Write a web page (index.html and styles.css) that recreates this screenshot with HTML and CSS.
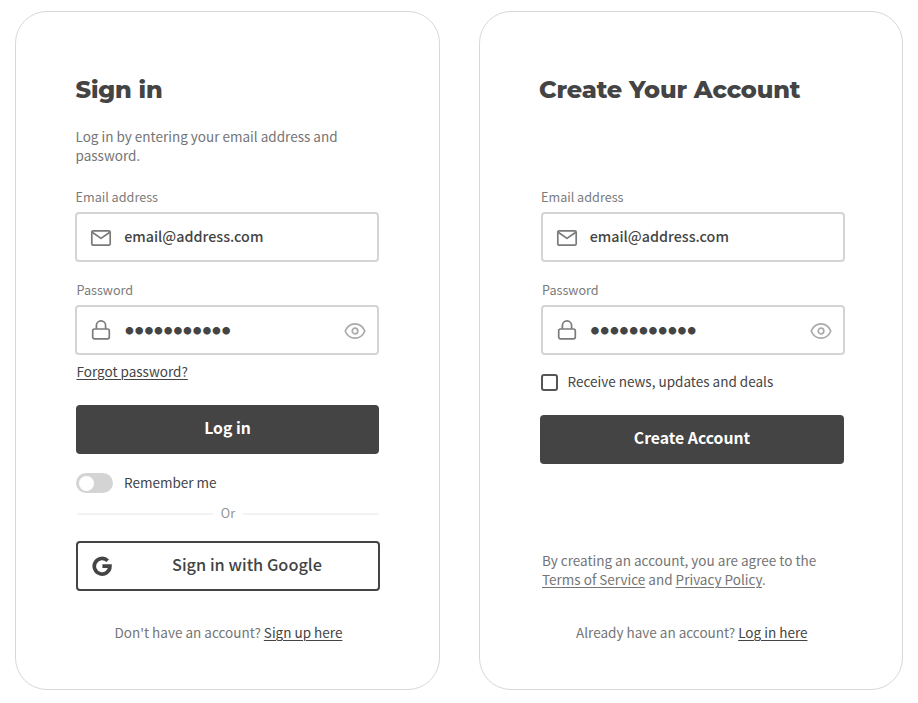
FILE: index.html
```html
<!DOCTYPE html>
<html lang="en">
<head>
<meta charset="utf-8">
<title>Sign in</title>
<link rel="stylesheet" href="styles.css">
</head>
<body>
<svg class="sprite" aria-hidden="true">
  <symbol id="mail" viewBox="0 0 22 18"><rect x="1.8" y="1.8" width="18.4" height="14.4" rx="1.4"/><path d="M2.2 3.2l8.800 6.200 8.800-6.200"/></symbol>
  <symbol id="lock" viewBox="0 0 20 22"><rect x="1.7" y="10" width="16.6" height="9.9" rx="1.8"/><path d="M5.4 9.800V6.500a4.6 4.6 0 0 1 9.2 0v3.3"/></symbol>
  <symbol id="eye" viewBox="0 0 22 18"><path d="M1.2 9C3.2 4.300 6.700 1.900 11 1.900S18.800 4.300 20.800 9C18.800 13.700 15.300 16.100 11 16.100S3.200 13.700 1.200 9z"/><circle cx="11" cy="9" r="2.800"/></symbol>
</svg>
<main class="page">
  <section class="card">
    <h1>Sign in</h1>
    <p class="intro">Log in by entering your email address and password.</p>
    <label class="label">Email address</label>
    <div class="field">
      <svg class="mail"><use href="#mail"/></svg>
      <span class="value">email@address.com</span>
    </div>
    <label class="label label-password">Password</label>
    <div class="field">
      <svg class="lock"><use href="#lock"/></svg>
      <span class="dots">●●●●●●●●●●●</span>
      <svg class="eye"><use href="#eye"/></svg>
    </div>
    <a class="forgot" href="#">Forgot password?</a>
    <button class="primary">Log in</button>
    <div class="remember"><span class="toggle"></span><span class="text">Remember me</span></div>
    <div class="divider"><span class="text">Or</span></div>
    <button class="google">
      <svg viewBox="0 0 20 20"><path d="M15.700 4.800A7.800 7.800 0 1 0 17.900 10.200H10.400"/></svg>
      <span>Sign in with Google</span>
    </button>
    <p class="footer">Don't have an account? <a href="#">Sign up here</a></p>
  </section>

  <section class="card create">
    <h1>Create Your Account</h1>
    <label class="label">Email address</label>
    <div class="field">
      <svg class="mail"><use href="#mail"/></svg>
      <span class="value">email@address.com</span>
    </div>
    <label class="label label-password">Password</label>
    <div class="field">
      <svg class="lock"><use href="#lock"/></svg>
      <span class="dots">●●●●●●●●●●●</span>
      <svg class="eye"><use href="#eye"/></svg>
    </div>
    <div class="news"><span class="box"></span><span class="text">Receive news, updates and deals</span></div>
    <button class="primary">Create Account</button>
    <p class="terms">By creating an account, you are agree to the<br><a href="#">Terms of Service</a> and <a href="#">Privacy Policy</a>.</p>
    <p class="footer">Already have an account? <a href="#">Log in here</a></p>
  </section>
</main>
</body>
</html>
```
FILE: styles.css
```css
* { box-sizing: border-box; }
body {
  margin: 0;
  background: #fff;
  color: #444;
  font: 13.52px/19px "Source Sans Pro", "Noto Sans CJK JP", sans-serif;
}
.sprite { display: none; }
.page { display: flex; gap: 39px; padding: 11px 0 0 15px; }
.card {
  display: flex;
  flex-direction: column;
  flex: none;
  width: 425px;
  height: 678.5px;
  padding: 63px 59px 0;
  border: 1px solid #d8d8d8;
  border-radius: 32px;
}
.card > * { flex: none; }
.create { width: 424px; padding-left: 61px; padding-right: 57px; }
h1 {
  margin: 0 0 22px 0.5px;
  font: 800 24px/30px Montserrat, "Open Sans", sans-serif;
  letter-spacing: -0.12px;
}
.create h1 { margin: 0 0 83px -2px; }
p { margin: 0; color: #757575; }
.intro { height: 38px; margin: 0 0 23px 0.5px; }
.label {
  height: 18px;
  margin: 0 0 6px 0.5px;
  font-size: 12.64px;
  line-height: 18px;
  color: #7b7b7b;
}
.create .label { margin-left: 0; }
.label-password, .create .label-password { margin: 19px 0 6px 1.500px; }
.create .label-password { margin-left: 1px; }
.field {
  display: flex;
  align-items: center;
  width: 304px;
  height: 50px;
  padding: 0 11px 0 14px;
  border: 2px solid #d4d4d4;
  border-radius: 4px;
}
.create .field { padding: 0 11.500px 0 13.500px; }
svg { flex: none; fill: none; stroke: #7a7a7a; stroke-width: 1.7; stroke-linejoin: round; }
.mail { width: 22px; height: 18px; margin: 2px 12.200px 0 -1px; }
.lock { width: 20px; height: 22px; margin: 0 14.300px 0 0; }
.eye { width: 22px; height: 18px; margin: 2px 0 0 auto; stroke: #aaa; }
.value { font-size: 14.3px; font-weight: 500; margin-bottom: 4px; }
.dots { font-size: 8.4px; letter-spacing: 1.3px; padding-top: 1px; }
a { color: #444; text-decoration: underline; text-decoration-thickness: 1px; text-underline-offset: 2px; }
.forgot { align-self: flex-start; margin: 7px 0 0 1.500px; }
button { display: flex; border-radius: 4px; font-family: inherit; color: #444; }
.primary {
  align-items: center;
  justify-content: center;
  width: 303px;
  height: 49.500px;
  margin: 23.500px 0 0 1px;
  padding: 0 0 3px;
  border: 0;
  background: #444;
  color: #fff;
  font-size: 15.75px;
  font-weight: 700;
}
.text { margin-bottom: 2px; }
.remember { display: flex; align-items: center; height: 20px; margin: 19px 0 0 1px; gap: 11px; }
.toggle { width: 37px; height: 20px; padding: 2.500px; border-radius: 10px; background: #d4d4d4; }
.toggle::before { content: ""; display: block; width: 15px; height: 15px; border-radius: 50%; background: #fff; }
.divider {
  display: flex;
  align-items: center;
  gap: 8px;
  width: 302px;
  height: 20px;
  margin: 10px 0 0 2px;
  color: #929292;
  font-size: 12.64px;
}
.divider::before, .divider::after { content: ""; flex: 1; height: 2px; margin-top: 2px; background: #f2f2f2; }
.google {
  align-items: center;
  width: 304px;
  height: 50px;
  margin: 18px 0 0 1px;
  padding: 0 14px;
  border: 2px solid #444;
  background: #fff;
  font-size: 16.32px;
  font-weight: 500;
}
.google svg { width: 20px; height: 20px; stroke: #444; stroke-width: 3.700; stroke-linejoin: miter; }
.google span { margin: 0 0 4px 60px; white-space: nowrap; }
.footer { margin: 32px 0 0 39.500px; }
.create .footer { margin: 34px 0 0 35px; }
.news { display: flex; align-items: center; height: 20px; margin: 17px 0 0; gap: 9.500px; }
.box { width: 17px; height: 17px; border: 2px solid #555; border-radius: 3px; margin-top: 1px; }
.create .primary { width: 304px; height: 49px; margin: 23px 0 0 -1px; padding-bottom: 5px; }
.terms { margin: 87px 0 0 1px; }
.terms a { color: inherit; }
```
